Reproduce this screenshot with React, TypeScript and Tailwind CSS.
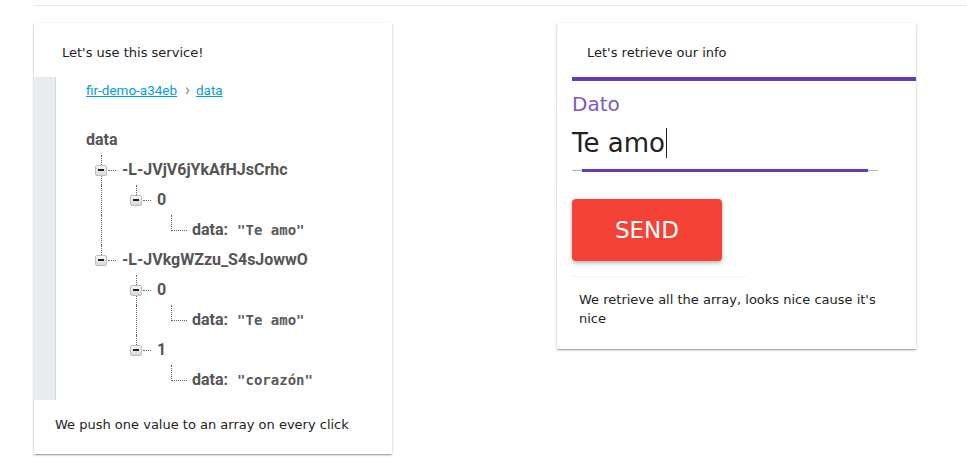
import { Fragment } from 'react';

type TreeNode = { label: string; value?: string; children?: TreeNode[] };

const tree: TreeNode[] = [
  {
    label: '-L-JVjV6jYkAfHJsCrhc',
    children: [{ label: '0', children: [{ label: 'data', value: '"Te amo"' }] }],
  },
  {
    label: '-L-JVkgWZzu_S4sJowwO',
    children: [
      { label: '0', children: [{ label: 'data', value: '"Te amo"' }] },
      { label: '1', children: [{ label: 'data', value: '"corazón"' }] },
    ],
  },
];

const Toggle = () => (
  <div className="flex h-[11px] w-[12px] shrink-0 items-center justify-center rounded-[2px] border border-[#bdbdbd] bg-linear-to-b from-[#f7f7f7] to-[#d9d9d9]">
    <div className="h-[2px] w-[6px] bg-[#222]" />
  </div>
);

const TreeRows = ({ nodes, guides }: { nodes: TreeNode[]; guides: boolean[] }) => (
  <>
    {nodes.map((node, i) => {
      const last = i === nodes.length - 1;
      return (
        <Fragment key={node.label + i}>
          <div className="flex h-[30px]">
            {guides.map((g, j) => (
              <div key={j} className="flex w-[35px] shrink-0">
                {g && <div className="ml-[6px] border-l border-dotted border-[#666]" />}
              </div>
            ))}
            {node.value !== undefined ? (
              <>
                <div className="ml-[6px] h-[16px] w-[16px] shrink-0 border-b border-l border-dotted border-[#666]" />
                <span className="ml-[5px] self-center font-bold">{node.label}:</span>
                <span className="ml-[9px] self-center font-['DejaVu_Sans_Mono',monospace] text-[14px] font-bold text-[#5a5a5a]">
                  {node.value}
                </span>
              </>
            ) : (
              <>
                <div className="flex w-[12px] shrink-0 flex-col items-center">
                  <div className="flex-1 border-l border-dotted border-[#666]" />
                  <Toggle />
                  <div
                    className={
                      last
                        ? 'flex-1 border-l border-dotted border-transparent'
                        : 'flex-1 border-l border-dotted border-[#666]'
                    }
                  />
                </div>
                <div className="ml-px w-[8px] self-center border-t border-dotted border-[#666]" />
                <span className="ml-[6px] self-center font-bold">{node.label}</span>
              </>
            )}
          </div>
          {node.children && <TreeRows nodes={node.children} guides={[...guides, !last]} />}
        </Fragment>
      );
    })}
  </>
);

const cardShadow =
  'bg-white shadow-[0_1px_3px_rgba(0,0,0,0.2),0_1px_1px_rgba(0,0,0,0.14),0_2px_1px_-1px_rgba(0,0,0,0.12)]';

export default function App() {
  return (
    <div className="min-h-[469px] bg-white pl-[34px] pt-[5px] font-['DejaVu_Sans',sans-serif] text-[13px] leading-[18px] text-[#222]">
      <div className="h-px bg-[#e6e6e6]" />

      <div className="mt-[17px] flex gap-[165px]">
        {/* left card: push demo */}
        <div className={`w-[358px] pb-[20px] pt-[21px] ${cardShadow}`}>
          <p className="pl-[28px]">Let's use this service!</p>

          <div className="mt-[15px] flex h-[323px]">
            <div className="w-[22px] shrink-0 border-r border-[#d4d7da] bg-[#e9ecef]" />
            <div className="flex-1 pl-[30px] pt-[5px] font-['Roboto',sans-serif] text-[16px] text-[#555]">
              <div className="flex items-center text-[13.5px] leading-[16px]">
                <span className="text-[#039be5] underline">fir-demo-a34eb</span>
                <span className="ml-[8px] mr-[6px] text-[16px] font-bold text-[#999]">›</span>
                <span className="text-[#039be5] underline">data</span>
              </div>
              <div className="mt-[27px] flex h-[30px] items-center font-bold">data</div>
              <div className="pl-[9px]">
                <TreeRows nodes={tree} guides={[]} />
              </div>
            </div>
          </div>

          <p className="mt-[16px] pl-[21px]">We push one value to an array on every click</p>
        </div>

        {/* right card: retrieve demo */}
        <div className={`h-[326px] w-[359px] pt-[21px] ${cardShadow}`}>
          <p className="pl-[30px]">Let's retrieve our info</p>
          <div className="ml-[15px] mt-[15px] h-[4px] bg-[#673ab7]" />

          <div className="ml-[15px] mt-[11px] w-[306px]">
            <div className="text-[20px] leading-[24px] text-[#7e57c2]">Dato</div>
            <div className="mt-[12px] flex h-[30px] items-center text-[26px] leading-[30px] text-[#222]">
              Te amo
              <span className="ml-px h-[30px] w-px bg-[#222]" />
            </div>
            <div className="mt-[11px] flex items-center">
              <div className="h-px w-[10px] bg-[#b5b5b5]" />
              <div className="h-[3px] flex-1 bg-[#673ab7]" />
              <div className="h-px w-[10px] bg-[#b5b5b5]" />
            </div>
          </div>

          <button className="ml-[15px] mt-[27px] flex h-[62px] w-[150px] items-center justify-center rounded-[4px] bg-[#f44336] text-[23px] text-white shadow-[0_2px_4px_rgba(0,0,0,0.3)]">
            SEND
          </button>
          <div className="ml-[15px] mt-[15px] h-px w-[175px] bg-[#f5f5f5]" />

          <p className="mt-[14px] pl-[22px] pr-[22px] leading-[18.5px]">
            We retrieve all the array, looks nice cause it's nice
          </p>
        </div>
      </div>
    </div>
  );
}
